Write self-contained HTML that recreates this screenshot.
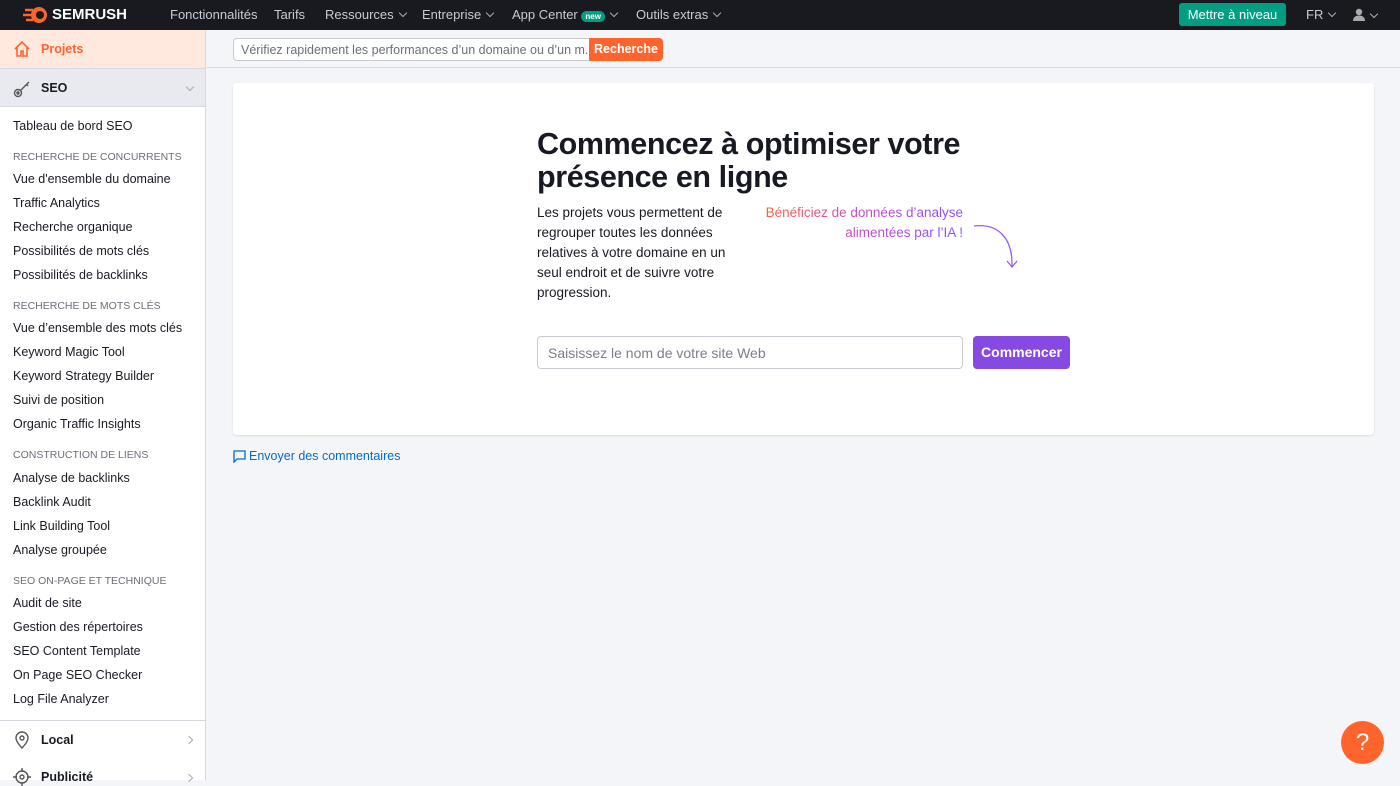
<!DOCTYPE html>
<html><head><meta charset="utf-8"><style>
*{box-sizing:border-box;margin:0;padding:0}
body{width:1400px;height:780px;overflow:hidden;font-family:"Liberation Sans",sans-serif;background:#f4f5f9;position:relative;color:#171a22}
.top{position:absolute;left:0;top:0;width:1400px;height:30px;background:#181a1f;color:#c9cbd2;font-size:13px}
.top span{position:absolute;top:7px}
.chev{display:inline-block;width:6px;height:6px;border-right:1px solid #aaa;border-bottom:1px solid #aaa;transform:rotate(45deg);margin-left:6px;position:relative;top:-3px}
.side{position:absolute;left:0;top:30px;width:206px;height:750px;background:#fff;border-right:1px solid #d6d8df}
.side .it{position:absolute;left:13px;font-size:12.5px;color:#171a22}
.side .h{position:absolute;left:13px;font-size:10.5px;color:#6c6e79;text-transform:uppercase}
.main-search{position:absolute;left:233px;top:38px;width:430px;height:23px;border:1px solid #c9cbd2;border-radius:4px;background:#fff;font-size:12.5px;color:#6c6e79;padding:4px 7px;white-space:nowrap;overflow:hidden}
.btn{position:absolute;left:589px;top:38px;width:74px;height:23px;background:#ff642d;color:#fff;font-size:12.5px;font-weight:bold;border-radius:0 4px 4px 0;text-align:center;line-height:23px}
.card{position:absolute;left:233px;top:83px;width:1141px;height:352px;background:#fff;border-radius:4px;box-shadow:0 1px 2px rgba(0,0,0,.1)}
</style></head><body>
<div class="top">
<svg style="position:absolute;left:23px;top:6px" width="26" height="18" viewBox="0 0 26 18"><path d="M2 4h8M0 9h8M3 14h7" stroke="#ff642d" stroke-width="2.5"/><circle cx="16" cy="9" r="8" fill="#ff642d"/><circle cx="17" cy="9" r="4" fill="#181a1f"/></svg>
<span style="left:52px;top:6px;color:#fff;font-weight:bold;font-size:15px">SEMRUSH</span>
<span style="left:170px">Fonctionnalités</span>
<span style="left:274px">Tarifs</span>
<span style="left:325px">Ressources<i class="chev"></i></span>
<span style="left:422px">Entreprise<i class="chev"></i></span>
<span style="left:512px">App Center <b style="background:#009f81;color:#fff;font-size:8px;padding:1px 4px;border-radius:6px">new</b><i class="chev"></i></span>
<span style="left:636px">Outils extras<i class="chev"></i></span>
<div style="position:absolute;left:1179px;top:3px;width:107px;height:23px;background:#009f81;border-radius:3px;color:#fff;font-size:13px;text-align:center;line-height:23px">Mettre à niveau</div>
<span style="left:1306px">FR<i class="chev"></i></span>
<svg style="position:absolute;left:1353px;top:8px" width="12" height="13" viewBox="0 0 12 13" fill="#aaa"><circle cx="6" cy="4" r="3.2"/><path d="M0 13c0-4 3-5.5 6-5.5s6 1.5 6 5.5z"/></svg>
<i class="chev" style="position:absolute;left:1365px;top:11px"></i>
</div>
<div class="side">
<div style="position:absolute;left:0;top:0;width:205px;height:38px;background:#ffe9df"></div>
<svg style="position:absolute;left:13px;top:10px" width="18" height="18" viewBox="0 0 18 18" fill="none" stroke="#ff642d" stroke-width="1.6"><path d="M2 9L9 2l7 7M4 7v9h4v-5h2v5h4V7"/></svg>
<div style="position:absolute;left:41px;top:12px;font-size:12.5px;font-weight:bold;color:#ff642d">Projets</div>
<div style="position:absolute;left:0;top:38px;width:205px;height:39px;background:#e9eaef;border-top:1px solid #d6d8df;border-bottom:1px solid #d6d8df"></div>
<svg style="position:absolute;left:13px;top:50px" width="18" height="18" viewBox="0 0 18 18" fill="none" stroke="#555" stroke-width="1.4"><circle cx="5" cy="13" r="3.5"/><circle cx="5" cy="13" r="1" fill="#555"/><path d="M8 10l8-8M13 4l2 2"/></svg>
<div style="position:absolute;left:41px;top:51px;font-size:12.5px;font-weight:bold">SEO</div>
<i class="chev" style="position:absolute;left:181px;top:54px"></i>
<div class="it" style="top:89px">Tableau de bord SEO</div>
<div class="h" style="top:121px">Recherche de concurrents</div>
<div class="it" style="top:142px">Vue d'ensemble du domaine</div>
<div class="it" style="top:166px">Traffic Analytics</div>
<div class="it" style="top:190px">Recherche organique</div>
<div class="it" style="top:214px">Possibilités de mots clés</div>
<div class="it" style="top:238px">Possibilités de backlinks</div>
<div class="h" style="top:270px">Recherche de mots clés</div>
<div class="it" style="top:291px">Vue d’ensemble des mots clés</div>
<div class="it" style="top:315px">Keyword Magic Tool</div>
<div class="it" style="top:339px">Keyword Strategy Builder</div>
<div class="it" style="top:363px">Suivi de position</div>
<div class="it" style="top:387px">Organic Traffic Insights</div>
<div class="h" style="top:419px">Construction de liens</div>
<div class="it" style="top:441px">Analyse de backlinks</div>
<div class="it" style="top:465px">Backlink Audit</div>
<div class="it" style="top:489px">Link Building Tool</div>
<div class="it" style="top:513px">Analyse groupée</div>
<div class="h" style="top:545px">SEO On-Page et technique</div>
<div class="it" style="top:566px">Audit de site</div>
<div class="it" style="top:590px">Gestion des répertoires</div>
<div class="it" style="top:614px">SEO Content Template</div>
<div class="it" style="top:638px">On Page SEO Checker</div>
<div class="it" style="top:662px">Log File Analyzer</div>
<div style="position:absolute;left:0;top:690px;width:205px;border-top:1px solid #d6d8df"></div>
<svg style="position:absolute;left:13px;top:701px" width="18" height="18" viewBox="0 0 18 18" fill="none" stroke="#555" stroke-width="1.4"><path d="M9 17s6-6 6-10A6 6 0 003 7c0 4 6 10 6 10z"/><circle cx="9" cy="7" r="2"/></svg>
<div style="position:absolute;left:41px;top:703px;font-size:12.5px;font-weight:bold">Local</div>
<i class="chev" style="position:absolute;left:180px;top:707px;transform:rotate(-45deg)"></i>
<svg style="position:absolute;left:13px;top:738px" width="18" height="18" viewBox="0 0 18 18" fill="none" stroke="#555" stroke-width="1.4"><circle cx="9" cy="9" r="6"/><circle cx="9" cy="9" r="2"/><path d="M9 0v4M9 14v4M0 9h4M14 9h4"/></svg>
<div style="position:absolute;left:41px;top:740px;font-size:12.5px;font-weight:bold">Publicité</div>
<i class="chev" style="position:absolute;left:180px;top:745px;transform:rotate(-45deg)"></i>
</div>
<div style="position:absolute;left:207px;top:30px;width:1193px;height:38px;background:#f4f5f9;border-bottom:1px solid #d6d8df"></div>
<div class="main-search">Vérifiez rapidement les performances d’un domaine ou d’un m...</div>
<div class="btn">Recherche</div>
<div class="card">
<div style="position:absolute;left:304px;top:45px;font-size:30.5px;font-weight:bold;line-height:33px;letter-spacing:-.4px">Commencez à optimiser votre<br>présence en ligne</div>
<div style="position:absolute;left:304px;top:120px;width:205px;font-size:13.5px;line-height:20px">Les projets vous permettent de regrouper toutes les données relatives à votre domaine en un seul endroit et de suivre votre progression.</div>
<div style="position:absolute;left:500px;top:120px;width:230px;text-align:right;font-size:13.5px;line-height:20px;background:linear-gradient(90deg,#ff642d 10%,#c24fc8 55%,#8a4fff);-webkit-background-clip:text;color:transparent">Bénéficiez de données d’analyse alimentées par l’IA !</div>
<svg style="position:absolute;left:740px;top:140px" width="50" height="48" viewBox="0 0 50 48" fill="none" stroke="#9a5cf5" stroke-width="1.3"><path d="M1 3C25 0 40 15 39 44M34 38l5 6 5-6"/></svg>
<div style="position:absolute;left:304px;top:253px;width:426px;height:33px;border:1px solid #c9cbd2;border-radius:4px;font-size:14px;color:#7c7e88;padding:8px 10px">Saisissez le nom de votre site Web</div>
<div style="position:absolute;left:740px;top:253px;width:97px;height:33px;background:#8649e1;border-radius:4px;color:#fff;font-size:14px;font-weight:bold;text-align:center;line-height:33px">Commencer</div>
</div>
<svg style="position:absolute;left:233px;top:450px" width="13" height="13" viewBox="0 0 13 13" fill="none" stroke="#006dca" stroke-width="1.3"><path d="M1 1h11v8H4l-3 3z"/></svg>
<div style="position:absolute;left:249px;top:449px;font-size:12.5px;color:#006dca">Envoyer des commentaires</div>
<div style="position:absolute;left:1341px;top:721px;width:43px;height:43px;border-radius:50%;background:#ff642d;color:#fff;font-size:24px;text-align:center;line-height:43px">?</div>
</body></html>
